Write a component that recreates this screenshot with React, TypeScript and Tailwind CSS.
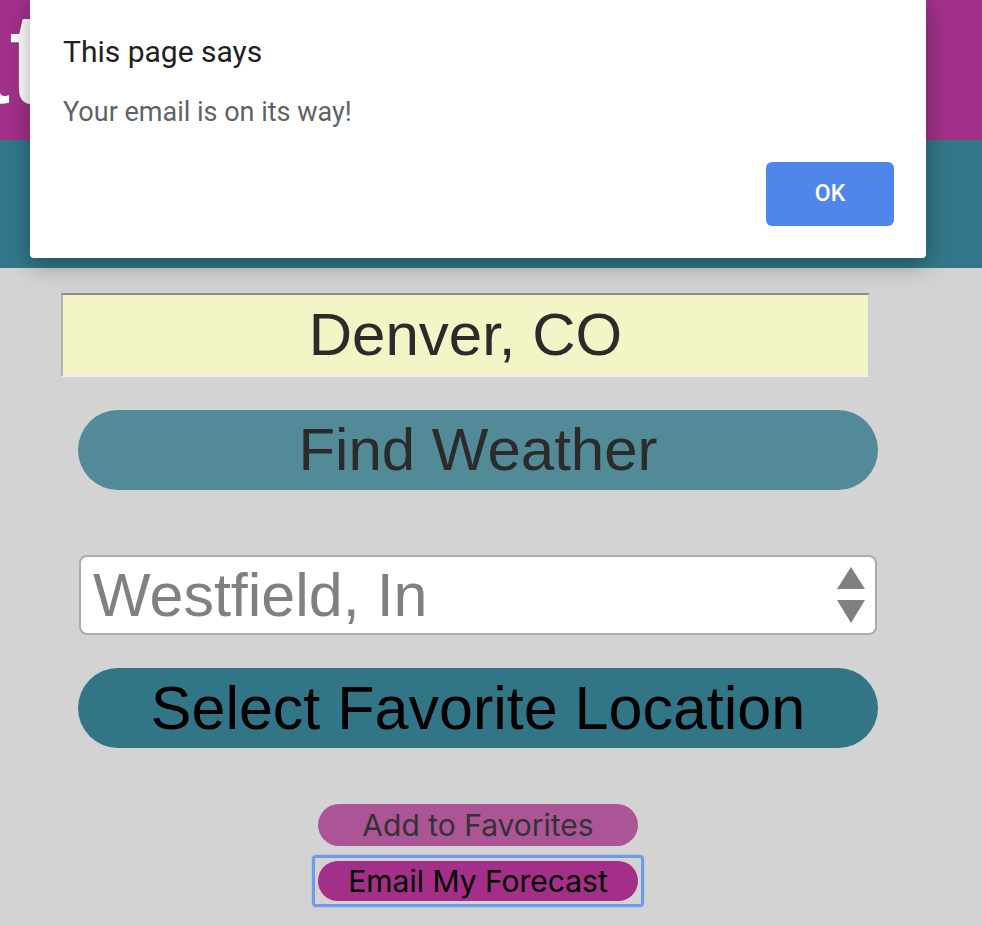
import React from 'react'

const sans = "font-['Liberation_Sans',Arial,sans-serif]"

function Arrows() {
    return (
        <svg width="30" height="60" viewBox="0 0 30 60" className="shrink-0">
            <polygon points="15,2 29,24 1,24" fill="#808080" />
            <polygon points="1,35 29,35 15,58" fill="#808080" />
        </svg>
    )
}

export default function App() {
    return (
        <div className="relative w-[982px] h-[926px] overflow-hidden bg-[#d3d3d3]">
            {/* Header */}
            <div className="h-[140px] bg-[#a2318a] overflow-hidden">
                <h1 className={`${sans} text-white text-[130px] leading-none ml-[-256px] mt-[-7px] whitespace-nowrap`}>
                    Weather
                </h1>
            </div>
            <div className="h-[128px] bg-[#32788a]" />

            {/* Form */}
            <div className={`${sans} w-[956px] flex flex-col items-center`}>
                <input
                    readOnly
                    value="Denver, CO"
                    className="self-start ml-[61px] mt-[25px] w-[809px] h-[84px] bg-[#f3f5c7] text-center text-[60px] text-[#2b2b2b] border-2 border-t-[#8c8c8c] border-l-[#b0b0b0] border-b-[#efefef] border-r-[#cfcfcf] outline-none"
                />
                <button className="mt-[33px] w-[800px] h-[80px] rounded-full bg-[#528a98] text-[60px] leading-none text-[#2b2b2b]">
                    Find Weather
                </button>
                <div className="mt-[65px] w-[798px] h-[80px] rounded-[8px] bg-white border-2 border-[#ababab] flex items-center justify-between pl-[12px] pr-[9px]">
                    <span className="text-[61px] leading-none text-[#808080]">Westfield, In</span>
                    <Arrows />
                </div>
                <button className="mt-[33px] w-[800px] h-[80px] rounded-full bg-[#327587] text-[61px] leading-none text-black">
                    Select Favorite Location
                </button>
                <div className="font-['Inter',sans-serif] flex flex-col items-center">
                    <button className="mt-[56px] w-[320px] h-[42px] rounded-full bg-[#ab5597] text-[30px] leading-none text-[#333]">
                        Add to Favorites
                    </button>
                    <div className="mt-[9px] border-[3px] border-[#6d9be8] rounded-[4px] p-[3px] shadow-[0_0_2px_#8fb3ee]">
                        <button className="block w-[320px] h-[40px] rounded-full bg-[#a32f88] text-[30px] leading-none text-black">
                            Email My Forecast
                        </button>
                    </div>
                </div>
            </div>

            {/* Alert dialog */}
            <div className="absolute left-[30px] top-0 w-[896px] h-[258px] bg-white rounded-b-[4px] shadow-[0_6px_24px_rgba(0,0,0,0.35)] font-['Roboto',sans-serif] flex flex-col">
                <div className="pl-[33px] pt-[37px] text-[30px] leading-none text-[#202124]">This page says</div>
                <div className="pl-[33px] pt-[32px] text-[27px] leading-none text-[#5f6368]">Your email is on its way!</div>
                <div className="flex justify-end pr-[32px] mt-auto mb-[32px]">
                    <button className="w-[128px] h-[64px] rounded-[6px] bg-[#5086ec] text-white text-[23px] font-medium">
                        OK
                    </button>
                </div>
            </div>
        </div>
    )
}
